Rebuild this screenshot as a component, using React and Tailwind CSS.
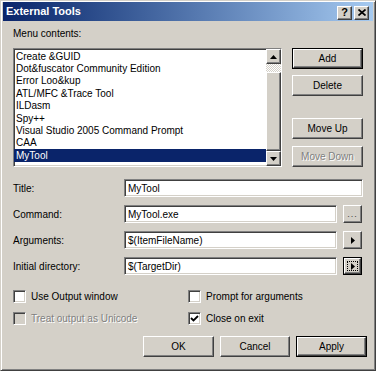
import React from 'react';

const raised =
  'border border-t-white border-l-white border-r-[#404040] border-b-[#404040] shadow-[inset_-1px_-1px_0_#808080] bg-[#d4d0c8]';
const sunken =
  'border border-t-[#808080] border-l-[#808080] border-r-white border-b-white shadow-[inset_1px_1px_0_#404040,inset_-1px_-1px_0_#d4d0c8]';

const items = [
  'Create &GUID',
  'Dot&fuscator Community Edition',
  'Error Loo&kup',
  'ATL/MFC &Trace Tool',
  'ILDasm',
  'Spy++',
  'Visual Studio 2005 Command Prompt',
  'CAA',
  'MyTool',
];

function Btn({ children, def, disabled, className = '' }) {
  const inner = (
    <div className={`${raised} flex h-full w-full items-center justify-center`}>
      <span className={disabled ? 'text-[#808080] [text-shadow:1px_1px_0_#fff]' : 'text-black'}>{children}</span>
    </div>
  );
  if (def) {
    return <div className={`border border-black ${className}`}>{inner}</div>;
  }
  return <div className={className}>{inner}</div>;
}

function Arrow({ dir }) {
  const d = dir === 'up' ? 'M0 4 L3.5 0 L7 4 Z' : dir === 'down' ? 'M0 0 L7 0 L3.5 4 Z' : 'M0 0 L4 3.5 L0 7 Z';
  const w = dir === 'right' ? 4 : 7;
  const h = dir === 'right' ? 7 : 4;
  return (
    <svg width={w} height={h} viewBox={`0 0 ${w} ${h}`}>
      <path d={d} fill="#000" />
    </svg>
  );
}

function Field({ label, value, wide, btn }) {
  return (
    <div className="flex h-[18px] items-center">
      <div className="w-[111px]">{label}</div>
      <div className={`${sunken} flex h-[18px] items-center bg-white pl-[3px] ${wide ? 'w-[239px]' : 'w-[213px]'}`}>
        {value}
      </div>
      {btn === 'dots' && (
        <div className={`${raised} ml-[6px] flex h-[18px] w-[19px] items-end justify-center pb-[3px] text-[9px] leading-none tracking-[1px] text-[#404040]`}>
          ...
        </div>
      )}
      {btn === 'arrow' && (
        <div className={`${raised} ml-[6px] flex h-[18px] w-[19px] items-center justify-center`}>
          <Arrow dir="right" />
        </div>
      )}
      {btn === 'focus' && (
        <div className="ml-[6px] h-[18px] w-[19px] border border-black">
          <div className={`${raised} relative flex h-full w-full items-center justify-center`}>
            <span className="absolute inset-[2px] border border-dotted border-black" />
            <Arrow dir="right" />
          </div>
        </div>
      )}
    </div>
  );
}

function Check({ label, checked, disabled }) {
  return (
    <div className="flex h-[13px] items-center">
      <div className={`${sunken} flex h-[13px] w-[13px] items-center justify-center ${disabled ? 'bg-[#d4d0c8]' : 'bg-white'}`}>
        {checked && (
          <svg width="9" height="9" viewBox="0 0 9 9">
            <path d="M1 4 L3.5 6.5 L8 2" stroke="#000" strokeWidth="1.8" fill="none" />
          </svg>
        )}
      </div>
      <span className={`ml-[5px] ${disabled ? 'text-[#808080] [text-shadow:1px_1px_0_#fff]' : ''}`}>{label}</span>
    </div>
  );
}

export default function App() {
  return (
    <div className="h-[371px] w-[376px] overflow-hidden border border-t-[#d4d0c8] border-l-[#d4d0c8] border-r-[#404040] border-b-[#404040] bg-[#d4d0c8] px-[2px] pt-[1px] text-[10px] leading-[13px] text-black shadow-[inset_1px_1px_0_#fff,inset_-1px_-1px_0_#808080] font-['Liberation_Sans',Arial,sans-serif]">
      {/* Title bar */}
      <div className="flex h-[19px] items-center justify-between bg-gradient-to-r from-[#0a246a] to-[#a6caf0] pl-[3px] pr-[4px]">
        <span className="text-[11px] font-bold text-white">External Tools</span>
        <div className="mt-[2px] flex gap-[2px]">
          <div className={`${raised} flex h-[14px] w-[15px] items-center justify-center text-[11px] font-bold leading-none`}>?</div>
          <div className={`${raised} flex h-[14px] w-[15px] items-center justify-center`}>
            <svg width="8" height="7" viewBox="0 0 8 7">
              <path d="M0.5 0.5 L7.5 6.5 M7.5 0.5 L0.5 6.5" stroke="#000" strokeWidth="1.7" />
            </svg>
          </div>
        </div>
      </div>

      <div className="pl-[10px]">
        <div className="mt-[6px] h-[13px]">Menu contents:</div>

        <div className="mt-[8px] flex">
          {/* List box */}
          <div className={`${sunken} flex h-[119px] w-[269px] bg-white`}>
            <div className="flex-1 pt-[1px]">
              {items.map((it, i) => (
                <div
                  key={it}
                  className={`flex h-[12.4px] items-center pl-[2px] ${i === items.length - 1 ? 'bg-[#0a246a] text-white' : ''}`}
                >
                  {it}
                </div>
              ))}
            </div>
            <div className="flex w-[15px] flex-col">
              <div className={`${raised} flex h-[15px] items-center justify-center`}>
                <Arrow dir="up" />
              </div>
              <div className="h-[8px] bg-[repeating-conic-gradient(#fff_0%_25%,#d4d0c8_0%_50%)] bg-size-[2px_2px]" />
              <div className={`${raised} flex-1`} />
              <div className={`${raised} flex h-[15px] items-center justify-center`}>
                <Arrow dir="down" />
              </div>
            </div>
          </div>

          {/* Side buttons */}
          <div className="ml-[10px] flex w-[71px] flex-col">
            <Btn def className="h-[21px]">Add</Btn>
            <Btn className="mt-[6px] h-[21px]">Delete</Btn>
            <Btn className="mt-[22px] h-[21px]">Move Up</Btn>
            <Btn disabled className="mt-[7px] h-[21px]">Move Down</Btn>
          </div>
        </div>

        <div className="mt-[12px] flex flex-col gap-[8px]">
          <Field label="Title:" value="MyTool" wide />
          <Field label="Command:" value="MyTool.exe" btn="dots" />
          <Field label="Arguments:" value="$(ItemFileName)" btn="arrow" />
          <Field label="Initial directory:" value="$(TargetDir)" btn="focus" />
        </div>

        <div className="mt-[15px] grid grid-cols-[175px_1fr] gap-y-[9px]">
          <Check label="Use Output window" />
          <Check label="Prompt for arguments" />
          <Check label="Treat output as Unicode" disabled />
          <Check label="Close on exit" checked />
        </div>

        <div className="mt-[11px] flex gap-[6px] pl-[130px]">
          <Btn className="h-[21px] w-[71px]">OK</Btn>
          <Btn className="h-[21px] w-[70px]">Cancel</Btn>
          <Btn def className="h-[21px] w-[71px]">Apply</Btn>
        </div>
      </div>
    </div>
  );
}
